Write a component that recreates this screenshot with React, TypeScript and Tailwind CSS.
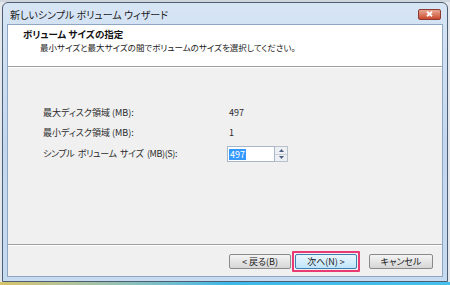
import React from "react";

const font = "[font-family:'Noto_Sans_CJK_JP','Noto_Sans',sans-serif] [font-feature-settings:'palt']";

function WinButton({ label, primary }: { label: string; primary?: boolean }) {
  const skin = primary
    ? "border-[#3c7fb1] bg-gradient-to-b from-[#eaf6fd] to-[#bfe5fb]"
    : "border-[#8a8a8a] bg-gradient-to-b from-[#f4f4f4] to-[#d6d6d6]";
  return (
    <div
      className={`flex h-[15px] items-center justify-center rounded-[2px] border text-[9px] leading-none text-[#1a1a1a] ${skin}`}
    >
      {label}
    </div>
  );
}

function Spinner() {
  return (
    <div className="flex h-[16px] w-[62px]">
      <div className="flex w-[48px] items-center border border-[#a8b6c6] bg-white pl-[1px]">
        <span className="bg-[#3399ff] px-[1px] text-[9px] leading-[11px] text-white">497</span>
      </div>
      <div className="flex w-[13px] flex-col border border-l-0 border-[#b8c0ca] bg-[#eceff3]">
        <div className="flex flex-1 items-center justify-center border-b border-[#c8cdd4]">
          <svg width="5" height="3" viewBox="0 0 5 3">
            <path d="M0 3 L2.5 0 L5 3 Z" fill="#4d6185" />
          </svg>
        </div>
        <div className="flex flex-1 items-center justify-center">
          <svg width="5" height="3" viewBox="0 0 5 3">
            <path d="M0 0 L2.5 3 L5 0 Z" fill="#4d6185" />
          </svg>
        </div>
      </div>
    </div>
  );
}

const rows = [
  { label: "最大ディスク領域 (MB):", value: "497" },
  { label: "最小ディスク領域 (MB):", value: "1" },
];

export default function App() {
  return (
    <div className={`flex h-[285px] w-[450px] flex-col overflow-hidden bg-[#e4e8ec] ${font}`}>
      <div className="h-[2px] bg-[#cfd5dc]" />
      <div className="ml-[2px] flex h-[280px] w-[446px] flex-col rounded-t-[6px] border border-[#4e5f73] bg-gradient-to-b from-[#d7e5f5] via-[#c3d8ef] to-[#c6daf0] px-[4px] pb-[4px]">
        <div className="flex h-[21px] items-center justify-between">
          <span className="pl-[3px] pt-[1px] text-[10px] text-[#1b1b1b]">新しいシンプル ボリューム ウィザード</span>
          <div className="mr-[2px] mt-[1px] flex h-[11px] w-[23px] items-center justify-center rounded-[2px] border border-[#8a3a2e] bg-gradient-to-b from-[#e8a793] to-[#c9462c]">
            <svg width="7" height="6" viewBox="0 0 7 6">
              <path d="M1 0.8 L6 5.2 M6 0.8 L1 5.2" stroke="#fff" strokeWidth="1.8" />
            </svg>
          </div>
        </div>
        <div className="flex flex-1 flex-col border border-[#8ea6c2] bg-[#f0f0f0]">
          <div className="flex h-[41px] flex-col bg-white pl-[15px] pt-[2px]">
            <span className="text-[9.5px] font-bold leading-[14px] text-[#111]">ボリューム サイズの指定</span>
            <span className="pl-[17px] text-[8.5px] leading-[13px] text-[#222]">
              最小サイズと最大サイズの間でボリュームのサイズを選択してください。
            </span>
          </div>
          <div className="h-[1px] bg-[#a0a0a0]" />
          <div className="h-[1px] bg-white" />
          <div className="flex flex-1 flex-col gap-[4px] pl-[35px] pt-[37px] text-[9px] text-[#2a2a2a]">
            {rows.map((row) => (
              <div key={row.label} className="flex h-[16px] items-center">
                <span className="w-[186px]">{row.label}</span>
                <span>{row.value}</span>
              </div>
            ))}
            <div className="mt-[1px] flex h-[16px] items-center">
              <span className="w-[184px] tracking-[-0.4px] [word-spacing:2px]">シンプル ボリューム サイズ (MB)(S):</span>
              <Spinner />
            </div>
          </div>
          <div className="h-[1px] bg-[#a0a0a0]" />
          <div className="h-[1px] bg-white" />
          <div className="flex h-[30px] items-center justify-end pr-[9px]">
            <div className="w-[62px]">
              <WinButton label="< 戻る(B)" />
            </div>
            <div className="ml-[1px] rounded-[1px] border-[2px] border-[#ea3a73] p-[1px]">
              <div className="w-[62px]">
                <WinButton label="次へ(N) >" primary />
              </div>
            </div>
            <div className="ml-[9px] w-[64px]">
              <WinButton label="キャンセル" />
            </div>
          </div>
        </div>
      </div>
      <div className="flex-1 bg-gradient-to-r from-[#d8c46a] via-[#3fb8e8] to-[#48c0ee]" />
    </div>
  );
}
